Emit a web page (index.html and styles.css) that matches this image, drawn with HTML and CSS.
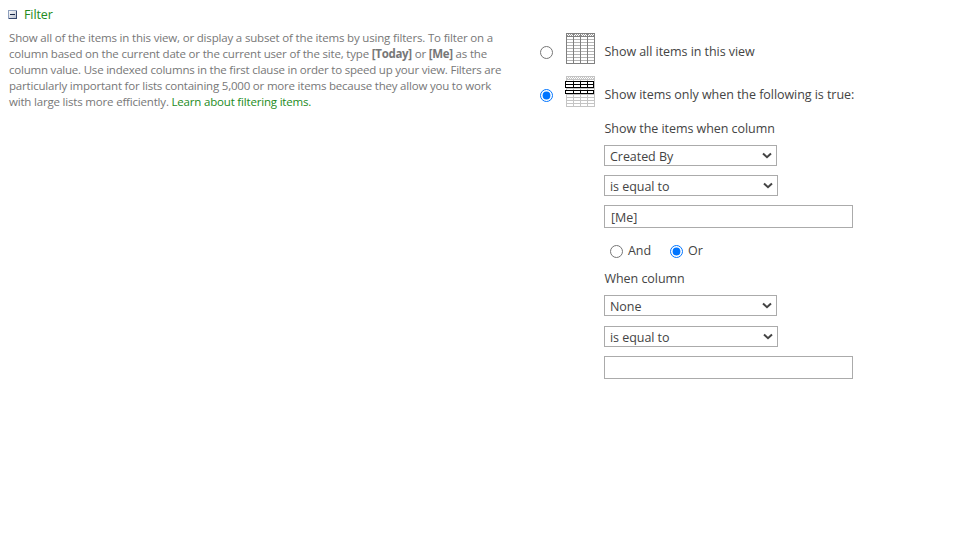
FILE: index.html
```
<!DOCTYPE html>
<html lang="en">
<head>
<meta charset="utf-8">
<title>Filter</title>
<link rel="stylesheet" href="styles.css">
</head>
<body>
<main class="filter">
  <section class="intro">
    <h3 class="title">
      <svg class="toggle" width="9" height="9" viewBox="0 0 9 9" shape-rendering="crispEdges">
        <defs><linearGradient id="g" x1="0" y1="0" x2="1" y2="1"><stop offset="0" stop-color="#fff"/><stop offset="1" stop-color="#b4bccb"/></linearGradient></defs>
        <rect x=".5" y=".5" width="8" height="8" fill="url(#g)" stroke="#8fa0bd"/>
        <path d="M8.500 1v7.500H1" fill="none" stroke="#35476d"/>
        <path d="M2 4.500h5" stroke="#182848"/>
      </svg>
      <span>Filter</span>
    </h3>
    <p class="description">
      <span class="line l1">Show all of the items in this view, or display a subset of the items by using filters. To filter on a</span>
      <span class="line l2">column based on the current date or the current user of the site, type <b>[Today]</b> or <b>[Me]</b> as the</span>
      <span class="line l3">column value. Use indexed columns in the first clause in order to speed up your view. Filters are</span>
      <span class="line l4">particularly important for lists containing 5,000 or more items because they allow you to work</span>
      <span class="line l5">with large lists more efficiently. <a class="link">Learn about filtering items.</a></span>
    </p>
  </section>
  <form class="options">
    <label class="choice">
      <input class="radio" type="radio" name="mode">
      <svg class="grid-icon" width="30" height="31" viewBox="0 0 30 31" shape-rendering="crispEdges">
        <defs><pattern id="c1" x="1" y="1" width="2" height="2" patternUnits="userSpaceOnUse"><path d="M0 0h1v1H0zM1 1h1v1H1z" fill="#999"/></pattern></defs>
        <rect x="1" y="1" width="29" height="2" fill="url(#c1)"/>
        <path d="M2 6.500h27M2 9.500h27M2 12.500h27M2 15.500h27M2 18.500h27M2 21.500h27M2 24.500h27M2 27.500h27" stroke="#b5b5b5"/>
        <path d="M1 .5h29M1 3.500h29M1 30.500h29M1.500 0v31M8.500 1v30M15.500 1v30M22.500 1v30M29.500 0v31" stroke="#808080"/>
      </svg>
      <span>Show all items in this view</span>
    </label>
    <label class="choice second">
      <input class="radio" type="radio" name="mode" checked>
      <svg class="grid-icon" width="30" height="31" viewBox="0 0 30 31" shape-rendering="crispEdges">
        <defs><pattern id="c2" x="1" y="1" width="2" height="2" patternUnits="userSpaceOnUse"><path d="M0 0h1v1H0zM1 1h1v1H1z" fill="#c4c4c4"/></pattern></defs>
        <rect x="1" y="1" width="29" height="2" fill="url(#c2)"/>
        <path d="M1 .5h29M1 3.500h29M1 12.500h29M1 18.500h29M1 21.500h29M1 24.500h29M1 27.500h29M1 30.500h29M1.500 0v31M8.500 3v28M15.500 3v28M22.500 3v28M29.500 0v31" stroke="#c4c4c4"/>
        <path d="M0 5h29v7H0zM0 14h29v4H0z" fill="#000"/>
        <path d="M1 7h7M9 7h6M16 7h6M23 7h5M1 10h7M9 10h6M16 10h6M23 10h5M1 16h7M9 16h6M16 16h6M23 16h5" stroke="#fff" stroke-width="2"/>
      </svg>
      <span>Show items only when the following is true:</span>
    </label>
    <div class="clauses">
      <div class="caption">Show the items when column</div>
      <div class="field column">
        <select class="select"><option>Created By</option></select>
        <svg class="arrow" width="10" height="7" viewBox="0 0 10 7"><path d="M1 1.500l4 3.700 4-3.700" fill="none" stroke="#444" stroke-width="2"/></svg>
      </div>
      <div class="field operator">
        <select class="select"><option>is equal to</option></select>
        <svg class="arrow" width="10" height="7" viewBox="0 0 10 7"><path d="M1 1.500l4 3.700 4-3.700" fill="none" stroke="#444" stroke-width="2"/></svg>
      </div>
      <input class="value" type="text" value="[Me]">
      <div class="join">
        <label class="join-item and"><input class="radio" type="radio" name="join"><span>And</span></label>
        <label class="join-item"><input class="radio" type="radio" name="join" checked><span>Or</span></label>
      </div>
      <div class="caption when">When column</div>
      <div class="field column">
        <select class="select"><option>None</option></select>
        <svg class="arrow" width="10" height="7" viewBox="0 0 10 7"><path d="M1 1.500l4 3.700 4-3.700" fill="none" stroke="#444" stroke-width="2"/></svg>
      </div>
      <div class="field operator last">
        <select class="select"><option>is equal to</option></select>
        <svg class="arrow" width="10" height="7" viewBox="0 0 10 7"><path d="M1 1.500l4 3.700 4-3.700" fill="none" stroke="#444" stroke-width="2"/></svg>
      </div>
      <input class="value" type="text">
    </div>
  </form>
</main>
</body>
</html>
```
FILE: styles.css
```
* { box-sizing: border-box; }
body {
  margin: 0;
  background: #fff;
  color: #444;
  font-family: "Open Sans", "Noto Sans", sans-serif;
  font-size: 12.5px;
}
.filter { display: flex; }
.intro { width: 540px; padding: 4px 0 0 8px; }
.title {
  display: flex;
  align-items: center;
  gap: 7px;
  height: 20px;
  margin: 0;
  color: #228b22;
  font-size: 12.5px;
  font-weight: 400;
  letter-spacing: -0.1px;
}
.description {
  margin: 6px 0 0 1px;
  color: #777;
  font-size: 11.5px;
  line-height: 16px;
}
.line { display: block; width: max-content; white-space: nowrap; }
.l1 { letter-spacing: -0.17px; }
.l2 { letter-spacing: -0.18px; }
.l3 { letter-spacing: -0.21px; }
.l4 { letter-spacing: -0.2px; }
.l5 { letter-spacing: -0.185px; }
.l2 b { letter-spacing: -0.3px; }
.link { color: #228b22; }
.options { padding-top: 33px; letter-spacing: -0.05px; }
.choice { display: flex; align-items: center; height: 31px; white-space: nowrap; }
.second { margin-top: 12px; }
.radio { width: 13px; height: 13px; margin: 0; flex: none; }
.choice .radio { margin-top: 7px; }
.grid-icon { margin: 0 9.5px 0 12px; }
.choice span { margin-top: 5px; }
.clauses { display: flex; flex-direction: column; align-items: flex-start; padding: 13px 0 0 64px; }
.caption { height: 18px; line-height: 18px; padding-left: 0.5px; }
.field { position: relative; display: flex; }
.select {
  width: 100%;
  height: 21px;
  margin: 0;
  padding: 1px 20px 0 5px;
  border: 1px solid #ababab;
  border-radius: 0;
  background: #fff;
  color: #444;
  font: inherit;
  letter-spacing: inherit;
  appearance: none;
}
.arrow { position: absolute; right: 5px; top: 7px; }
.column { width: 173px; margin-top: 7px; }
.operator { width: 174px; margin-top: 9px; }
.last { margin-top: 10px; }
.value {
  width: 249px;
  height: 23px;
  margin: 9px 0 0;
  padding: 2px 6px 0;
  border: 1px solid #ababab;
  color: #444;
  font: inherit;
  letter-spacing: inherit;
}
.join { display: flex; height: 18px; margin: 14px 0 10px 6px; }
.join-item { display: flex; align-items: center; gap: 5px; line-height: 18px; }
.join-item .radio { margin-top: 1px; }
.and { width: 60px; }
```
